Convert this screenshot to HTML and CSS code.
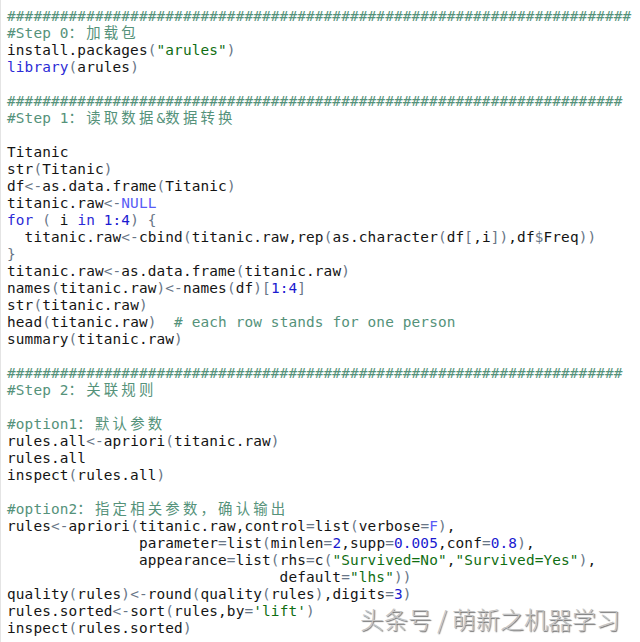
FILE: index.html
```html
<!DOCTYPE html>
<html lang="zh">
<head>
<meta charset="utf-8">
<title>arules</title>
<link rel="stylesheet" href="styles.css">
</head>
<body>
<div class="editor">
<div class="code">
<div class="ln"><span class="c">#######################################################################</span></div>
<div class="ln"><span class="c">#Step 0<span class="z">：加载包</span></span></div>
<div class="ln">install.packages<span class="o">(</span><span class="s">"arules"</span><span class="o">)</span></div>
<div class="ln"><span class="k">library</span><span class="o">(</span>arules<span class="o">)</span></div>
<div class="ln"></div>
<div class="ln"><span class="c">######################################################################</span></div>
<div class="ln"><span class="c">#Step 1<span class="z">：读取数据</span>&amp;<span class="z">数据转换</span></span></div>
<div class="ln"></div>
<div class="ln">Titanic</div>
<div class="ln">str<span class="o">(</span>Titanic<span class="o">)</span></div>
<div class="ln">df<span class="o">&lt;-</span>as.data.frame<span class="o">(</span>Titanic<span class="o">)</span></div>
<div class="ln">titanic.raw<span class="o">&lt;-</span><span class="l">NULL</span></div>
<div class="ln"><span class="k">for</span> <span class="o">(</span> i <span class="k">in</span> <span class="n">1:4</span><span class="o">)</span> <span class="o">{</span></div>
<div class="ln">  titanic.raw<span class="o">&lt;-</span>cbind<span class="o">(</span>titanic.raw,rep<span class="o">(</span>as.character<span class="o">(</span>df<span class="o">[</span>,i<span class="o">])</span>,df<span class="o">$</span>Freq<span class="o">))</span></div>
<div class="ln"><span class="o">}</span></div>
<div class="ln">titanic.raw<span class="o">&lt;-</span>as.data.frame<span class="o">(</span>titanic.raw<span class="o">)</span></div>
<div class="ln">names<span class="o">(</span>titanic.raw<span class="o">)&lt;-</span>names<span class="o">(</span>df<span class="o">)[</span><span class="n">1:4</span><span class="o">]</span></div>
<div class="ln">str<span class="o">(</span>titanic.raw<span class="o">)</span></div>
<div class="ln">head<span class="o">(</span>titanic.raw<span class="o">)</span>  <span class="c"># each row stands for one person</span></div>
<div class="ln">summary<span class="o">(</span>titanic.raw<span class="o">)</span></div>
<div class="ln"></div>
<div class="ln"><span class="c">######################################################################</span></div>
<div class="ln"><span class="c">#Step 2<span class="z">：关联规则</span></span></div>
<div class="ln"></div>
<div class="ln"><span class="c">#option1<span class="z">：默认参数</span></span></div>
<div class="ln">rules.all<span class="o">&lt;-</span>apriori<span class="o">(</span>titanic.raw<span class="o">)</span></div>
<div class="ln">rules.all</div>
<div class="ln">inspect<span class="o">(</span>rules.all<span class="o">)</span></div>
<div class="ln"></div>
<div class="ln"><span class="c">#option2<span class="z">：指定相关参数，确认输出</span></span></div>
<div class="ln">rules<span class="o">&lt;-</span>apriori<span class="o">(</span>titanic.raw,control<span class="o">=</span>list<span class="o">(</span>verbose<span class="o">=</span><span class="l">F</span><span class="o">)</span>,</div>
<div class="ln">               parameter<span class="o">=</span>list<span class="o">(</span>minlen<span class="o">=</span><span class="n">2</span>,supp<span class="o">=</span><span class="n">0.005</span>,conf<span class="o">=</span><span class="n">0.8</span><span class="o">)</span>,</div>
<div class="ln">               appearance<span class="o">=</span>list<span class="o">(</span>rhs<span class="o">=</span>c<span class="o">(</span><span class="s">"Survived=No"</span>,<span class="s">"Survived=Yes"</span><span class="o">)</span>,</div>
<div class="ln">                               default<span class="o">=</span><span class="s">"lhs"</span><span class="o">))</span></div>
<div class="ln">quality<span class="o">(</span>rules<span class="o">)&lt;-</span>round<span class="o">(</span>quality<span class="o">(</span>rules<span class="o">)</span>,digits<span class="o">=</span><span class="n">3</span><span class="o">)</span></div>
<div class="ln">rules.sorted<span class="o">&lt;-</span>sort<span class="o">(</span>rules,by<span class="o">=</span><span class="s">'lift'</span><span class="o">)</span></div>
<div class="ln">inspect<span class="o">(</span>rules.sorted<span class="o">)</span></div>
</div>
<div class="watermark">头条号 / 萌新之机器学习</div>
</div>
</body>
</html>
```
FILE: styles.css
```css
html, body {
  margin: 0;
  padding: 0;
  background: #ffffff;
}

.editor {
  position: relative;
  width: 640px;
  height: 642px;
  overflow: hidden;
  background: #ffffff;
  border-left: 1px solid #e4e4e4;
  box-sizing: border-box;
}

.code {
  display: flex;
  flex-direction: column;
  padding: 8px 0 0 6px;
  font-family: "DejaVu Sans Mono", "Liberation Mono", "Noto Sans CJK SC", monospace;
  font-size: 14.4px;
  letter-spacing: 0.13px;
  line-height: 17px;
  color: #141414;
}

.ln {
  height: 17px;
  white-space: pre;
  overflow: visible;
}

.z {
  font-family: "DejaVu Sans Mono", "Noto Sans CJK SC", monospace;
  line-height: 17px;
  letter-spacing: calc(17.6px - 1em);
}

.c { color: #55927a; }
.k { color: #2b2bd6; }
.l { color: #585cf6; }
.n { color: #1a1ad0; }
.s { color: #0f6e12; }
.o { color: #687687; }

.watermark {
  position: absolute;
  left: 359px;
  top: 604px;
  font-family: "Noto Sans CJK SC", sans-serif;
  font-weight: 300;
  font-size: 24px;
  line-height: 30px;
  color: #c4c4c4;
  text-shadow: 1px 1px 1px #6f6f6f;
  white-space: nowrap;
}
```
